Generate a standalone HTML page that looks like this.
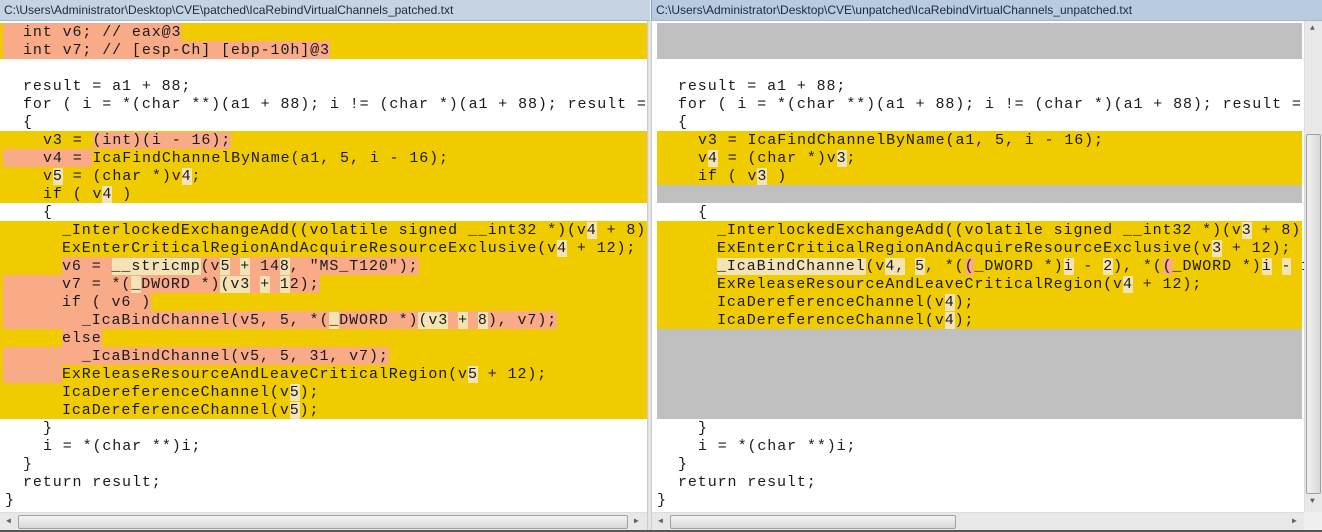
<!DOCTYPE html>
<html><head><meta charset="utf-8"><style>
*{margin:0;padding:0;box-sizing:border-box}
body{width:1322px;height:532px;background:#f0f0f0;position:relative;overflow:hidden;font-family:"Liberation Mono",monospace;font-size:15px;letter-spacing:0.9px;color:#1a1a1a}
.tb{position:absolute;top:0;height:21px;font:12px/20px "Liberation Sans",sans-serif;letter-spacing:0;color:#1e2a3a;padding-left:4px;white-space:nowrap;overflow:hidden;border-bottom:1px solid #a9b6c6}
.pane{position:absolute;top:21px;height:491px;background:#fff;overflow:hidden}
.r{position:absolute;left:0;right:0;height:18px;line-height:19px;white-space:pre}
.y{background:#f0cb00}.g{background:#c0c0c0}
.p{background:#f9aa86}.l{background:#f4e3b4}
.t{position:absolute;top:0;height:18px}
.hs{position:absolute;top:512px;height:18px;background:#e8e8e8;border-top:1px solid #ddd}
.th{position:absolute;top:2px;height:14px;background:linear-gradient(#f4f4f4,#d8d8d8);border:1px solid #a0a0a0;border-radius:2px}
</style></head><body>
<div class="tb" style="left:0;width:650px;background:#c5d3e2">C:\Users\Administrator\Desktop\CVE\patched\IcaRebindVirtualChannels_patched.txt</div>
<div class="tb" style="left:651px;width:671px;background:#b9cbe0;border-left:1px solid #8fa4bd">C:\Users\Administrator\Desktop\CVE\unpatched\IcaRebindVirtualChannels_unpatched.txt</div>

<div class="pane" style="left:0;width:647px">
<div class="r y" style="top:2px"><span class="t p" style="left:3px;width:20px"></span><span class="t p" style="left:23px">int v6; // eax@3</span></div>
<div class="r y" style="top:20px"><span class="t p" style="left:3px;width:20px"></span><span class="t p" style="left:23px">int v7; // [esp-Ch] [ebp-10h]@3</span></div>
<div class="r" style="top:56px"><span class="t" style="left:23px">result = a1 + 88;</span></div>
<div class="r" style="top:74px"><span class="t" style="left:23px">for ( i = *(char **)(a1 + 88); i != (char *)(a1 + 88); result = </span></div>
<div class="r" style="top:92px"><span class="t" style="left:23px">{</span></div>
<div class="r y" style="top:110px"><span class="t" style="left:43px">v3 = <span class="p">(int)(i - 16);</span></span></div>
<div class="r y" style="top:128px"><span class="t p" style="left:3px;width:89px"></span><span class="t" style="left:43px">v4 = IcaFindChannelByName(a1, 5, i - 16);</span></div>
<div class="r y" style="top:146px"><span class="t" style="left:43px">v<span class="l">5</span> = (char *)v<span class="l">4</span>;</span></div>
<div class="r y" style="top:164px"><span class="t" style="left:43px">if ( v<span class="l">4</span> )</span></div>
<div class="r" style="top:182px"><span class="t" style="left:43px">{</span></div>
<div class="r y" style="top:200px"><span class="t" style="left:62px">_InterlockedExchangeAdd((volatile signed __int32 *)(v<span class="l">4</span> + 8));</span></div>
<div class="r y" style="top:218px"><span class="t" style="left:62px">ExEnterCriticalRegionAndAcquireResourceExclusive(v<span class="l">4</span> + 12);</span></div>
<div class="r y" style="top:236px"><span class="t p" style="left:62px">v6 = <span class="l">__stricmp</span>(v<span class="l">5</span> <span class="l">+</span> 14<span class="l">8</span>, "MS_T120");</span></div>
<div class="r y" style="top:254px"><span class="t p" style="left:3px;width:59px"></span><span class="t p" style="left:62px">v7 = *(<span class="l">_</span>DWORD *)<span class="l">(v3</span> <span class="l">+</span> <span class="l">1</span>2);</span></div>
<div class="r y" style="top:272px"><span class="t p" style="left:3px;width:59px"></span><span class="t p" style="left:62px">if ( v6 )</span></div>
<div class="r y" style="top:290px"><span class="t p" style="left:3px;width:59px"></span><span class="t p" style="left:62px">  _IcaBindChannel(v5, 5, *(<span class="l">_</span>DWORD *)<span class="l">(v3</span> <span class="l">+</span> <span class="l">8</span>), v7);</span></div>
<div class="r y" style="top:308px"><span class="t p" style="left:62px">else</span></div>
<div class="r y" style="top:326px"><span class="t p" style="left:3px;width:59px"></span><span class="t p" style="left:62px">  _IcaBindChannel(v5, 5, 31, v7);</span></div>
<div class="r y" style="top:344px"><span class="t p" style="left:3px;width:59px"></span><span class="t" style="left:62px">ExReleaseResourceAndLeaveCriticalRegion(v<span class="l">5</span> + 12);</span></div>
<div class="r y" style="top:362px"><span class="t" style="left:62px">IcaDereferenceChannel(v<span class="l">5</span>);</span></div>
<div class="r y" style="top:380px"><span class="t" style="left:62px">IcaDereferenceChannel(v<span class="l">5</span>);</span></div>
<div class="r" style="top:398px"><span class="t" style="left:43px">}</span></div>
<div class="r" style="top:416px"><span class="t" style="left:43px">i = *(char **)i;</span></div>
<div class="r" style="top:434px"><span class="t" style="left:23px">}</span></div>
<div class="r" style="top:452px"><span class="t" style="left:23px">return result;</span></div>
<div class="r" style="top:470px"><span class="t" style="left:5px">}</span></div>
</div>

<div style="position:absolute;left:647px;top:21px;width:5px;height:511px;background:#e4e4e4;border-left:1px solid #ccc;border-right:1px solid #ccc"></div>

<div class="pane" style="left:652px;width:652px">
<div class="r g" style="top:2px;left:5px;right:2px"></div>
<div class="r g" style="top:20px;left:5px;right:2px"></div>
<div class="r" style="top:56px"><span class="t" style="left:26px">result = a1 + 88;</span></div>
<div class="r" style="top:74px"><span class="t" style="left:26px">for ( i = *(char **)(a1 + 88); i != (char *)(a1 + 88); result = </span></div>
<div class="r" style="top:92px"><span class="t" style="left:26px">{</span></div>
<div class="r y" style="top:110px;left:5px;right:2px"><span class="t" style="left:41px">v3 = IcaFindChannelByName(a1, 5, i - 16);</span></div>
<div class="r y" style="top:128px;left:5px;right:2px"><span class="t" style="left:41px">v<span class="l">4</span> = (char *)v<span class="l">3</span>;</span></div>
<div class="r y" style="top:146px;left:5px;right:2px"><span class="t" style="left:41px">if ( v<span class="l">3</span> )</span></div>
<div class="r g" style="top:164px;left:5px;right:2px"></div>
<div class="r" style="top:182px"><span class="t" style="left:46px">{</span></div>
<div class="r y" style="top:200px;left:5px;right:2px"><span class="t" style="left:60px">_InterlockedExchangeAdd((volatile signed __int32 *)(v<span class="l">3</span> + 8));</span></div>
<div class="r y" style="top:218px;left:5px;right:2px"><span class="t" style="left:60px">ExEnterCriticalRegionAndAcquireResourceExclusive(v<span class="l">3</span> + 12);</span></div>
<div class="r y" style="top:236px;left:5px;right:2px"><span class="t" style="left:60px"><span class="l">_IcaBindChannel</span>(v<span class="l">4,</span> <span class="l">5</span>, *(<span class="p">(</span>_DWORD *)<span class="l">i</span> - <span class="l">2</span>), *(<span class="p">(</span>_DWORD *)<span class="l">i</span> <span class="l">-</span> 1));</span></div>
<div class="r y" style="top:254px;left:5px;right:2px"><span class="t" style="left:60px">ExReleaseResourceAndLeaveCriticalRegion(v<span class="l">4</span> + 12);</span></div>
<div class="r y" style="top:272px;left:5px;right:2px"><span class="t" style="left:60px">IcaDereferenceChannel(v<span class="l">4</span>);</span></div>
<div class="r y" style="top:290px;left:5px;right:2px"><span class="t" style="left:60px">IcaDereferenceChannel(v<span class="l">4</span>);</span></div>
<div class="r g" style="top:308px;left:5px;right:2px;height:90px"></div>
<div class="r" style="top:398px"><span class="t" style="left:46px">}</span></div>
<div class="r" style="top:416px"><span class="t" style="left:46px">i = *(char **)i;</span></div>
<div class="r" style="top:434px"><span class="t" style="left:26px">}</span></div>
<div class="r" style="top:452px"><span class="t" style="left:26px">return result;</span></div>
<div class="r" style="top:470px"><span class="t" style="left:5px">}</span></div>
</div>

<div style="position:absolute;left:1304px;top:21px;width:18px;height:491px;background:#e8e8e8;border-left:1px solid #ddd">
<div style="position:absolute;left:1px;top:113px;width:15px;height:360px;background:linear-gradient(90deg,#f2f2f2,#d9d9d9);border:1px solid #a0a0a0;border-radius:2px"></div>
<div style="position:absolute;left:5px;top:3px;font-size:8px;color:#606060">▲</div>
<div style="position:absolute;left:5px;top:476px;font-size:8px;color:#606060">▼</div>
</div>
<div class="hs" style="left:0;width:647px"><div class="th" style="left:18px;width:610px"></div><span style="position:absolute;left:6px;top:3px;font-size:8px;color:#606060">◀</span><span style="position:absolute;left:634px;top:3px;font-size:8px;color:#606060">▶</span></div>
<div class="hs" style="left:652px;width:652px"><div class="th" style="left:18px;width:286px"></div><span style="position:absolute;left:6px;top:3px;font-size:8px;color:#606060">◀</span><span style="position:absolute;left:640px;top:3px;font-size:8px;color:#606060">▶</span></div>
<div style="position:absolute;left:0;top:530px;width:1322px;height:2px;background:#555"></div>
</body></html>
